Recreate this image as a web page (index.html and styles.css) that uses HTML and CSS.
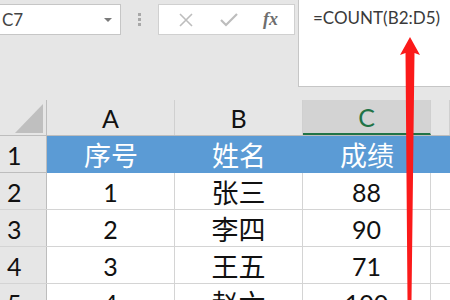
FILE: index.html
```html
<!DOCTYPE html>
<html lang="zh-CN">
<head>
    <meta charset="UTF-8">
    <title>COUNT</title>
    <link rel="stylesheet" href="styles.css">
</head>
<body>

    <!-- Formula toolbar -->
    <div class="toolbar">
        <div class="left-tools">
            <div class="name-box">
                <span>C7</span>
                <span class="caret"></span>
            </div>
            <div class="grip"><i></i><i></i><i></i></div>
            <div class="buttons">
                <svg width="18" height="18" viewBox="0 0 18 18"><path d="M3 3 L15 15 M15 3 L3 15" stroke="#bdbdbd" stroke-width="1.6" fill="none"/></svg>
                <svg width="20" height="16" viewBox="0 0 20 16"><path d="M2 8 L7 13 L18 2" stroke="#bdbdbd" stroke-width="2.2" fill="none"/></svg>
                <span class="fx">fx</span>
            </div>
        </div>
        <div class="formula">=COUNT(B2:D5)</div>
    </div>

    <!-- Sheet -->
    <div class="sheet">
        <div class="row head">
            <div class="rh corner"><span class="tri"></span></div>
            <div class="cell">A</div>
            <div class="cell">B</div>
            <div class="cell active">C</div>
            <div class="cell rest"></div>
        </div>
        <div class="row title">
            <div class="rh">1</div>
            <div class="cell zh">序号</div>
            <div class="cell zh">姓名</div>
            <div class="cell zh">成绩</div>
            <div class="cell rest"></div>
        </div>
        <div class="row">
            <div class="rh">2</div>
            <div class="cell">1</div>
            <div class="cell zh">张三</div>
            <div class="cell">88</div>
            <div class="cell rest"></div>
        </div>
        <div class="row">
            <div class="rh">3</div>
            <div class="cell">2</div>
            <div class="cell zh">李四</div>
            <div class="cell">90</div>
            <div class="cell rest"></div>
        </div>
        <div class="row">
            <div class="rh">4</div>
            <div class="cell">3</div>
            <div class="cell zh">王五</div>
            <div class="cell">71</div>
            <div class="cell rest"></div>
        </div>
        <div class="row">
            <div class="rh">5</div>
            <div class="cell">4</div>
            <div class="cell zh">赵六</div>
            <div class="cell">100</div>
            <div class="cell rest"></div>
        </div>
    </div>

    <!-- Red arrow pointing at the formula -->
    <svg class="arrow" width="450" height="300" viewBox="0 0 450 300">
        <path d="M410 37 L420 55 L414.5 53 L411.5 300 L407.5 300 L405.5 53 L400 55 Z" fill="#fb1a1a"/>
    </svg>

</body>
</html>
```

FILE: styles.css
```css
body, html {
    margin: 0;
    padding: 0;
    overflow: hidden;
}

body {
    width: 450px;
    height: 300px;
    background: #e6e6e6;
    font-family: 'Lato', 'Noto Sans CJK SC', sans-serif;
    position: relative;
}

/* Toolbar */
.toolbar {
    display: flex;
    height: 100px;
}

.left-tools {
    display: flex;
    align-items: flex-start;
    width: 298px;
    padding-top: 4px;
    box-sizing: border-box;
}

.name-box {
    width: 122px;
    height: 31px;
    margin-left: -1px;
    background: #fff;
    border: 1px solid #c6c6c6;
    box-sizing: border-box;
    display: flex;
    align-items: center;
    justify-content: space-between;
    padding: 0 8px 0 2px;
    font-size: 17px;
    color: #444;
}

.caret {
    width: 0;
    height: 0;
    border-left: 4px solid transparent;
    border-right: 4px solid transparent;
    border-top: 4px solid #7a7a7a;
}

.grip {
    width: 37px;
    display: flex;
    flex-direction: column;
    align-items: center;
    gap: 2px;
    padding-top: 9px;
}

.grip i {
    display: block;
    width: 3px;
    height: 3px;
    background: #a8a8a8;
}

.buttons {
    width: 137px;
    height: 31px;
    background: #fff;
    border: 1px solid #d0d0d0;
    box-sizing: border-box;
    display: flex;
    align-items: center;
    justify-content: space-around;
    padding: 0 4px 0 6px;
}

.fx {
    font-family: 'Liberation Serif', serif;
    font-style: italic;
    font-weight: bold;
    font-size: 18px;
    color: #6e6e6e;
}

.formula {
    flex: 1;
    height: 88px;
    margin-top: -1px;
    background: #fff;
    border: 1px solid #c6c6c6;
    border-right: none;
    box-sizing: border-box;
    padding: 7px 0 0 14px;
    font-size: 17px;
    color: #3a3a3a;
}

/* Sheet grid */
.sheet {
    background: #fff;
}

.row {
    display: flex;
    height: 37px;
    border-bottom: 1px solid #d4d4d4;
    box-sizing: border-box;
}

.cell {
    display: flex;
    align-items: center;
    justify-content: center;
    width: 128px;
    border-right: 1px solid #d4d4d4;
    box-sizing: border-box;
    padding-top: 2px;
    font-size: 25px;
    color: #111;
}

.cell.zh {
    font-size: 27px;
    padding-top: 0;
}

.cell.rest {
    flex: 1;
    border-right: none;
}

.rh {
    width: 47px;
    background: #e6e6e6;
    border-right: 1px solid #bdbdbd;
    box-sizing: border-box;
    display: flex;
    align-items: center;
    padding: 2px 0 0 7px;
    font-size: 25px;
    color: #111;
}

.row.head {
    height: 36px;
    background: #e6e6e6;
    border-bottom: 1px solid #bdbdbd;
}

.row.head .cell {
    border-right: 1px solid #d0d0d0;
    padding-top: 1px;
}

.row.head .cell.active {
    background: #d3d3d3;
    color: #217346;
    border-bottom: 2px solid #217346;
}

.corner {
    position: relative;
}

.tri {
    position: absolute;
    left: 15px;
    bottom: 2px;
    width: 0;
    height: 0;
    border-left: 28px solid transparent;
    border-bottom: 29px solid #bfbfbf;
}

.row.title {
    background: #5b9bd5;
    border-bottom: none;
}

.row.title .cell {
    color: #fff;
    border-right: none;
}

.row.title .rh {
    border-bottom: 1px solid #bdbdbd;
}

.arrow {
    position: absolute;
    left: 0;
    top: 0;
}
```
